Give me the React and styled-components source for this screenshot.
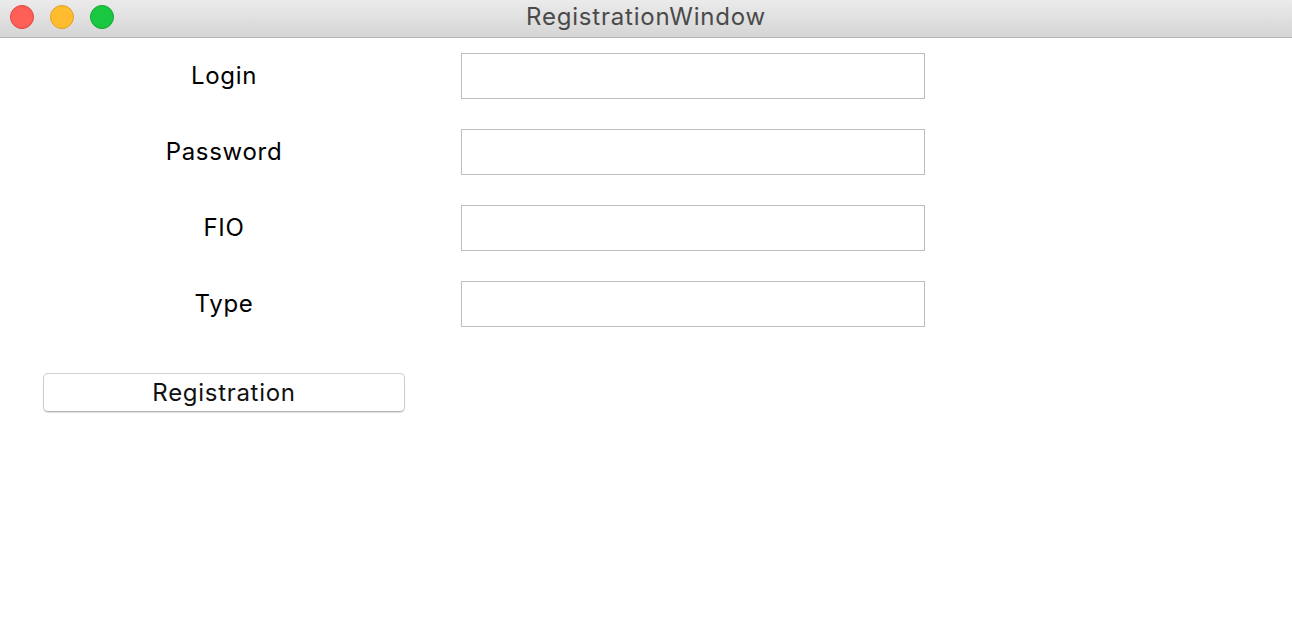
import React from "react";
import styled, { createGlobalStyle } from "styled-components";

const Global = createGlobalStyle`
  html, body { margin: 0; padding: 0; background: #ffffff; }
  body { font-family: Inter, "Noto Sans", sans-serif; }
  * { box-sizing: border-box; }
`;

const Window = styled.div`
  width: 1292px;
  height: 620px;
  background: #ffffff;
  display: flex;
  flex-direction: column;
`;

const TitleBar = styled.div`
  height: 38px;
  flex: none;
  background: linear-gradient(#ebebeb, #d5d5d5);
  border-bottom: 1px solid #b4b4b4;
  display: flex;
  align-items: center;
  position: relative;
  padding-left: 10px;
`;

const Lights = styled.div`
  display: flex;
  gap: 16px;
  align-items: center;
  margin-top: -4px;
`;

const Light = styled.span`
  width: 24px;
  height: 24px;
  border-radius: 50%;
  background: ${(p) => p.$bg};
  border: 1px solid ${(p) => p.$bd};
`;

const Title = styled.div`
  position: absolute;
  left: 0;
  right: 0;
  top: 0;
  bottom: 0;
  display: flex;
  align-items: center;
  justify-content: center;
  font-size: 24px;
  letter-spacing: 0.8px;
  color: #4a4a4a;
  padding-bottom: 4px;
  pointer-events: none;
`;

const Content = styled.div`
  padding: 15px 0 0 43px;
  display: flex;
  flex-direction: column;
`;

const Form = styled.div`
  display: grid;
  grid-template-columns: 362px 464px;
  column-gap: 56px;
  row-gap: 30px;
  align-items: center;
`;

const Label = styled.div`
  font-size: 24px;
  letter-spacing: 0.7px;
  color: #000000;
  text-align: center;
  padding-bottom: 2px;
`;

const Field = styled.input`
  height: 46px;
  width: 464px;
  border: 1px solid #bdbdbd;
  background: #ffffff;
  outline: none;
  margin: 0;
  padding: 0 8px;
  font-family: inherit;
  font-size: 22px;
`;

const Button = styled.button`
  margin-top: 46px;
  width: 362px;
  height: 39px;
  background: #ffffff;
  border: 1px solid #cfcfcf;
  border-bottom-color: #b3b3b3;
  border-radius: 5px;
  box-shadow: 0 1px 1px rgba(0, 0, 0, 0.12);
  font-family: inherit;
  font-size: 24px;
  letter-spacing: 0.7px;
  color: #111111;
  padding: 0 0 1px;
`;

const fields = ["Login", "Password", "FIO", "Type"];

export default function App() {
  return (
    <>
      <Global />
      <Window>
        <TitleBar>
          <Lights>
            <Light $bg="#fe5f57" $bd="#e0443e" />
            <Light $bg="#febc2e" $bd="#dea123" />
            <Light $bg="#19c840" $bd="#13a42f" />
          </Lights>
          <Title>RegistrationWindow</Title>
        </TitleBar>
        <Content>
          <Form>
            {fields.map((f) => (
              <React.Fragment key={f}>
                <Label>{f}</Label>
                <Field type={f === "Password" ? "password" : "text"} />
              </React.Fragment>
            ))}
          </Form>
          <Button>Registration</Button>
        </Content>
      </Window>
    </>
  );
}
